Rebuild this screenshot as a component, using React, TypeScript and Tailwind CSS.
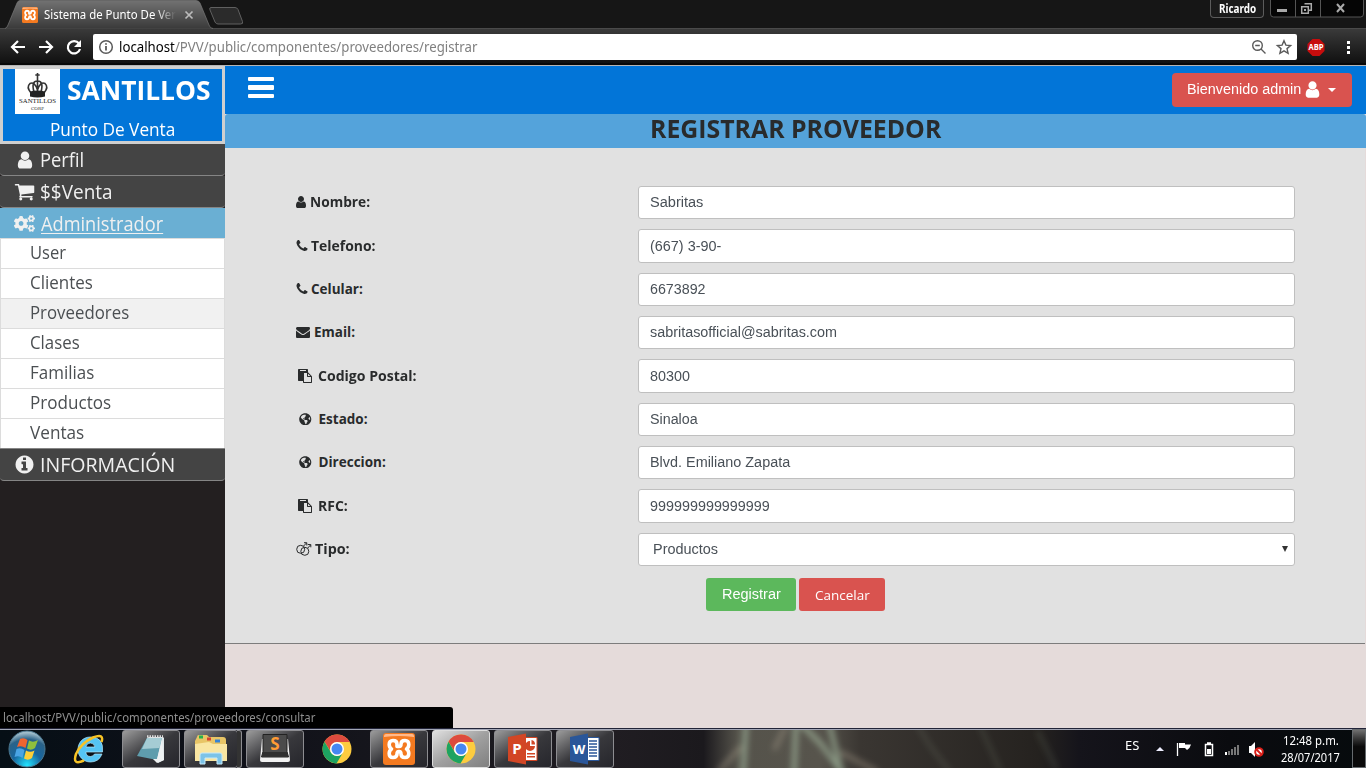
import { useLayoutEffect, useRef, useState, type ReactNode } from "react";
import { FaCogs, FaGlobeAmericas } from "react-icons/fa";

/* Inline text that is condensed or widened to a given advance width. */
function Fit({ w, children, className = "", inner = "" }: { w: number; children: ReactNode; className?: string; inner?: string }) {
  const ref = useRef<HTMLSpanElement>(null);
  const [scale, setScale] = useState(1);
  useLayoutEffect(() => {
    if (ref.current) setScale(w / ref.current.offsetWidth);
  }, [w]);
  return (
    <span className={"inline-block shrink-0 whitespace-nowrap text-left " + className} style={{ width: w }}>
      <span ref={ref} className={"inline-block origin-left " + inner} style={{ transform: `scaleX(${scale})` }}>
        {children}
      </span>
    </span>
  );
}

const paths = {
  user: "M1536 1399q0 109-62.5 187t-150.5 78h-854q-88 0-150.5-78t-62.5-187q0-85 8.5-160.5t31.5-152 58.5-131 94-89 134.5-34.5q131 128 313 128t313-128q76 0 134.5 34.5t94 89 58.5 131 31.5 152 8.5 160.5zm-256-887q0 159-112.5 271.5t-271.5 112.5-271.5-112.5-112.5-271.5 112.5-271.5 271.5-112.5 271.5 112.5 112.5 271.5z",
  cart: "M704 1536q0 52-38 90t-90 38-90-38-38-90 38-90 90-38 90 38 38 90zm896 0q0 52-38 90t-90 38-90-38-38-90 38-90 90-38 90 38 38 90zm128-1088v512q0 24-16.5 42.5t-40.5 21.5l-1044 122q13 60 13 70 0 16-24 64h920q26 0 45 19t19 45-19 45-45 19h-1024q-26 0-45-19t-19-45q0-11 8-31.5t16-36 21.5-40 15.5-29.5l-177-823h-204q-26 0-45-19t-19-45 19-45 45-19h256q16 0 28.5 6.5t19.5 15.5 13 24.5 8 26 5.5 29.5 4.5 26h1201q26 0 45 19t19 45z",
  phone: "M1600 1240q0 27-10 70.5t-21 68.5q-21 50-122 106-94 51-186 51-27 0-53-3.5t-57.5-12.5-47-14.5-55.5-20.5-49-18q-98-35-175-83-127-79-264-216t-216-264q-48-77-83-175-3-9-18-49t-20.5-55.5-14.5-47-12.5-57.5-3.5-53q0-92 51-186 56-101 106-122 25-11 68.5-21t70.5-10q14 0 21 3 18 6 53 76 11 19 30 54t35 63.5 31 53.5q3 4 17.5 25t21.5 35.5 7 28.5q0 20-28.5 50t-62 55-62 53-28.5 46q0 9 5 22.5t8.5 20.5 14 24 11.5 19q76 137 174 235t235 174q2 1 19 11.5t24 14 20.5 8.5 22.5 5q18 0 46-28.5t53-62 55-62 50-28.5q14 0 28.5 7t35.5 21.5 25 17.5q25 15 53.5 31t63.5 35 54 30q70 35 76 53 3 7 3 21z",
  mail: "M1792 710v794q0 66-47 113t-113 47h-1472q-66 0-113-47t-47-113v-794q44 49 101 87 362 246 497 345 57 42 92.5 65.5t94.5 48 110 24.5h2q51 0 110-24.5t94.5-48 92.5-65.5q170-123 498-345 57-39 100-87zm0-294q0 79-49 151t-122 123q-376 261-468 325-10 7-42.5 31t-54 38.5-52 32.5-57.5 27-50 9h-2q-23 0-50-9t-57.5-27-52-32.5-54-38.5-42.5-31q-91-64-262-182.5t-205-142.5q-62-42-117-115.5t-55-136.5q0-78 41.5-130t118.5-52h1472q65 0 112.5 47t47.5 113z",
  paste: "M768 1664h896v-640h-416q-40 0-68-28t-28-68v-416h-384v1152zm256-1440v-64q0-13-9.5-22.5t-22.5-9.5h-704q-13 0-22.5 9.5t-9.5 22.5v64q0 13 9.5 22.5t22.5 9.5h704q13 0 22.5-9.5t9.5-22.5zm256 672h299l-299-299v299zm512 128v672q0 40-28 68t-68 28h-960q-40 0-68-28t-28-68v-160h-544q-40 0-68-28t-28-68v-1344q0-40 28-68t68-28h1088q40 0 68 28t28 68v328q21 13 36 28l408 408q28 28 48 76t20 88z",
  info: "M1152 1376v-160q0-14-9-23t-23-9h-96v-512q0-14-9-23t-23-9h-320q-14 0-23 9t-9 23v160q0 14 9 23t23 9h96v320h-96q-14 0-23 9t-9 23v160q0 14 9 23t23 9h448q14 0 23-9t9-23zm-128-896v-160q0-14-9-23t-23-9h-192q-14 0-23 9t-9 23v160q0 14 9 23t23 9h192q14 0 23-9t9-23zm640 416q0 209-103 385.5t-279.5 279.5-385.5 103-385.5-103-279.5-279.5-103-385.5 103-385.5 279.5-279.5 385.5-103 385.5 103 279.5 279.5 103 385.5z",
};

function Glyph({ name, className }: { name: keyof typeof paths; className: string }) {
  return (
    <svg viewBox="0 0 1792 1792" fill="currentColor" className={"shrink-0 " + className}>
      <path d={paths[name]} />
    </svg>
  );
}

function Xampp({ className }: { className: string }) {
  return (
    <svg viewBox="0 0 32 32" className={"shrink-0 " + className}>
      <rect width="32" height="32" rx="3" fill="#f47a20" />
      <path d="M1 3q0-2 2-2h26q2 0 2 2v1q-15-2-30 0z" fill="#ffb98a" />
      <path
        d="M14 13.500V11q0-3.500-4-3.500-3.800 0-3.800 4 0 3 2.300 4.500-2.300 1.500-2.300 4.500 0 4 3.800 4 4 0 4-3.500 0-2.500 2-2.500t2 2.500q0 3.500 4 3.500 3.800 0 3.800-4 0-3-2.300-4.500 2.300-1.500 2.300-4.500 0-4-3.800-4-4 0-4 3.500 0 2.500-2 2.500t-2-2.500"
        fill="none" stroke="#fff" strokeWidth="3.600" strokeLinecap="round" strokeLinejoin="round"
      />
    </svg>
  );
}

function Chrome() {
  return (
    <svg viewBox="0 0 30 30" className="size-[30px]">
      <circle cx="15" cy="15" r="14.500" fill="#fdcc3f" />
      <path d="M2.500 7.700A14.500 14.500 0 0 1 27.700 8H15a7 7 0 0 0-6.600 9z" fill="#dd4b3e" />
      <path d="M2.500 7.700A14.500 14.500 0 0 0 14.500 29.500L21 18.500a7 7 0 0 1-12 0z" fill="#1da361" />
      <circle cx="15" cy="15" r="7" fill="#fff" />
      <circle cx="15" cy="15" r="5.500" fill="#4688f1" />
    </svg>
  );
}

function BrowserChrome() {
  return (
    <header className="relative h-[66px] w-full bg-[#161616] font-['Noto_Sans','Open_Sans',sans-serif]">
      <div className="h-[28px]" />
      <div className="flex h-[35px] items-center border-t border-[#4a4a4a] bg-gradient-to-b from-[#3a3a3a] to-[#111] pt-px">
        <svg viewBox="0 0 90 34" className="h-[34px] w-[90px] shrink-0" fill="none" stroke="#fff" strokeWidth="2.200">
          <path d="M25 17H12M18 11l-6 6 6 6M39 17h13M46 11l6 6-6 6" />
          <path d="M79 13.500A6.200 6.200 0 1 0 80 19" />
          <path d="M81 10v7h-7z" fill="#fff" stroke="none" />
        </svg>
        <div className="ml-[3px] flex h-[26px] w-[1204px] items-center rounded-[2px] bg-white">
          <svg viewBox="0 0 16 16" className="ml-[5px] size-4" fill="none" stroke="#5a5a5a" strokeWidth="1.500">
            <circle cx="8" cy="8" r="6.300" />
            <path d="M8 7v4.500M8 4.200v1.600" strokeWidth="1.800" />
          </svg>
          <Fit w={358} className="ml-[5px] text-[14px] leading-[20px] text-[#808080]">
            <span className="text-black">localhost</span>/PVV/public/componentes/proveedores/registrar
          </Fit>
          <svg viewBox="0 0 44 16" className="ml-auto mr-[2px] h-4 w-[44px]" fill="none" stroke="#5a5a5a" strokeWidth="1.400">
            <circle cx="6.500" cy="6.500" r="4.800" />
            <path d="M10 10l4.500 4.500M4.200 6.500h4.600" />
            <path d="M33 1.700l1.900 4.400 4.700.4-3.600 3.100 1.100 4.700-4.100-2.500-4.100 2.500L30 9.600l-3.600-3.100 4.700-.4z" />
          </svg>
        </div>
        <svg viewBox="0 0 69 34" className="h-[34px] w-[69px]">
          <path d="M15.500 9h7l5 5v7l-5 5h-7l-5-5v-7z" fill="#c70d0d" />
          <text x="19" y="20.300" textAnchor="middle" fontSize="8" fontWeight="700" fill="#fff" textLength="15" lengthAdjust="spacingAndGlyphs" fontFamily="Open Sans">ABP</text>
          <path d="M50 11h3v3h-3zM50 16h3v3h-3zM50 21h3v3h-3z" fill="#fff" />
        </svg>
      </div>
      <div className="h-[2px] bg-[#080808]" />
      <div className="h-px bg-[#b5b5b5]" />

      <svg viewBox="0 0 250 29" className="absolute left-0 top-0 h-[29px] w-[250px]">
        <defs>
          <linearGradient id="tab" x2="0" y2="1">
            <stop offset="0" stopColor="#727272" />
            <stop offset="1" stopColor="#3a3a3a" />
          </linearGradient>
        </defs>
        <path d="M0 28.500h5Q7 28 8 25L17 3q1-2.500 3-2.500h176q3 0 4 2.500l9 22q1 3.500 4 3.500z" fill="url(#tab)" />
        <path d="M5 28.500Q7 28 8 25L17 3q1-2.500 3-2.500h176q3 0 4 2.500l9 22q1 3.500 4 3.500" fill="none" stroke="#777" strokeWidth=".7" />
        <path d="M211 7.500h24q2 0 3 2l4.500 12q1 2.500-2 2.500H218q-2 0-3-2l-5-12q-1-2.500 1-2.500z" fill="#2b2b2b" stroke="#606060" />
        <path d="M185.500 11.500l7 7m0-7l-7 7" stroke="#bbb" strokeWidth="1.700" />
      </svg>
      <div className="absolute left-[22px] top-[7px] flex items-center">
        <Xampp className="size-4" />
        <Fit w={132} className="ml-[6px] text-[12px] leading-4 text-white [mask-image:linear-gradient(to_right,black_85%,transparent)]">
          Sistema de Punto De Ver
        </Fit>
      </div>
      <div className="absolute left-[1210px] top-0 flex h-[18px] w-[54px] justify-center rounded-b border border-t-0 border-[#5c5c5c] bg-[#1b1b1b]">
        <Fit w={37} className="text-[11.500px] font-bold leading-[17px] text-white">Ricardo</Fit>
      </div>
      <svg viewBox="0 0 94 18" className="absolute left-[1270px] top-0 h-[18px] w-[94px]" fill="none">
        <path d="M.5 0v14q0 3 3 3h87q3 0 3-3V0M25.500 0v17M50.500 0v17" fill="#050505" stroke="#555" />
        <path d="M7 9h10v3H7z" fill="#a8a8a8" />
        <path d="M31.700 6.700h6.600v6.600h-6.600zM34.500 3.700h6.800v6.600H39" stroke="#aaa" strokeWidth="1.500" />
        <path d="M34 9h2v2h-2z" fill="#aaa" />
        <path d="M67 4l7 8m0-8l-7 8" stroke="#aaa" strokeWidth="2" />
      </svg>
    </header>
  );
}

const submenu: [string, number][] = [
  ["User", 36], ["Clientes", 63], ["Proveedores", 99], ["Clases", 50], ["Familias", 64], ["Productos", 81], ["Ventas", 54],
];

function Sidebar() {
  return (
    <aside className="flex w-[225px] shrink-0 flex-col bg-[#231f20] font-['Open_Sans','Noto_Sans',sans-serif] text-[20px] text-[#f0f0f0]">
      <div className="h-[78px] border-[3px] border-[#cfcfcf] bg-[#0275d8] text-white">
        <div className="flex h-[45px]">
          <svg viewBox="0 0 45 45" className="ml-3 size-[45px] bg-white">
            <g fill="none" stroke="#333" strokeWidth="1.600">
              <path d="M22.500 4v19M20.300 6h4.400M16 24q-5-6-1-9.500 4.500-2.500 7.500 6.500 3-9 7.500-6.500 4 3.500-1 9.500M19 23q-3-11 3.500-11T26 23" />
            </g>
            <path d="M15 22.500q7.500-2 15 0v5q-7.500 2-15 0z" fill="#222" />
            <text x="22.500" y="33.800" fontSize="7" textAnchor="middle" textLength="37" lengthAdjust="spacingAndGlyphs" fontFamily="Liberation Serif" fill="#222">SANTILLOS</text>
            <text x="22.500" y="41" fontSize="5" textAnchor="middle" textLength="13" lengthAdjust="spacingAndGlyphs" fontFamily="Liberation Serif" fill="#333">CORP</text>
          </svg>
          <Fit w={143} className="ml-[7px] text-[26px] font-bold leading-[43px]">SANTILLOS</Fit>
        </div>
        <Fit w={125} className="ml-[47px] block text-[17.500px] leading-[22px]">Punto De Venta</Fit>
      </div>
      <div className="flex h-8 items-center rounded-b-sm border-b border-[#858585] bg-[#444]">
        <Glyph name="user" className="ml-[15px] size-5" />
        <Fit w={44} className="ml-[5px] leading-[30px]">Perfil</Fit>
      </div>
      <div className="flex h-8 items-center rounded-b-sm border-b border-[#858585] bg-[#444]">
        <Glyph name="cart" className="ml-[14px] size-[21px]" />
        <Fit w={73} className="ml-[5px] leading-[30px]">$$Venta</Fit>
      </div>
      <div className="flex h-[30px] items-center bg-[#6aafd3]">
        <FaCogs className="ml-[14px] size-[21px]" />
        <Fit w={122} className="ml-[6px] pt-[2px] leading-[30px]" inner="underline decoration-1 underline-offset-2">Administrador</Fit>
      </div>
      <div className="bg-white text-[17.500px] text-[#4b4f52]">
        {submenu.map(([label, w]) => (
          <div key={label} className={"flex h-[30px] items-center border border-b-0 border-[#dcdcdc] pl-[29px] " + (label === "Proveedores" ? "bg-[#f1f1f1]" : "bg-white")}>
            <Fit w={w} className="pb-[2px] leading-[27px]">{label}</Fit>
          </div>
        ))}
      </div>
      <div className="flex h-[33px] items-center rounded-b-sm border-y border-[#858585] bg-[#444]">
        <Glyph name="info" className="ml-[14px] size-[21px]" />
        <Fit w={135} className="ml-[5px] leading-[31px]">INFORMACIÓN</Fit>
      </div>
    </aside>
  );
}

function MarsDouble() {
  return (
    <svg viewBox="0 0 16 16" className="mr-[3px] size-4" fill="none" stroke="#292b2c" strokeWidth="1">
      <circle cx="4.700" cy="8.300" r="4" />
      <circle cx="8.800" cy="10.300" r="4" />
      <path d="M7.300 5.300L10.500 2M8 1.700h2.800v2.800M11.500 7.300l3-3.300M11.800 3.500h3v2.800" />
    </svg>
  );
}

const paste = <Glyph name="paste" className="ml-[2px] mr-[6px] size-[14px]" />;
const globe = <FaGlobeAmericas className="ml-[3px] mr-[7px] size-[12.500px]" />;
const phone = <Glyph name="phone" className="-ml-px mr-[2px] size-[14px]" />;

const fields: { icon: ReactNode; label: string; lw: number; value: string; vw: number }[] = [
  { icon: <Glyph name="user" className="-ml-[2px] mr-[2px] size-[14px]" />, label: "Nombre:", lw: 60, value: "Sabritas", vw: 53 },
  { icon: phone, label: "Telefono:", lw: 65, value: "(667) 3-90-", vw: 71 },
  { icon: phone, label: "Celular:", lw: 52, value: "6673892", vw: 56 },
  { icon: <Glyph name="mail" className="mr-[4px] size-[14px]" />, label: "Email:", lw: 41, value: "sabritasofficial@sabritas.com", vw: 187 },
  { icon: paste, label: "Codigo Postal:", lw: 99, value: "80300", vw: 40 },
  { icon: globe, label: "Estado:", lw: 49, value: "Sinaloa", vw: 48 },
  { icon: globe, label: "Direccion:", lw: 67, value: "Blvd. Emiliano Zapata", vw: 140 },
  { icon: paste, label: "RFC:", lw: 30, value: "999999999999999", vw: 120 },
  { icon: <MarsDouble />, label: "Tipo:", lw: 35, value: "Productos", vw: 65 },
];

function Main() {
  return (
    <main className="flex min-w-0 flex-1 flex-col bg-[#e5dbda]">
      <div className="flex h-12 shrink-0 items-start justify-between bg-[#0275d8] pl-[23px] pr-[14px]">
        <div className="mt-[11px] flex w-[26px] flex-col gap-1">
          <div className="h-[4px] rounded-[1px] bg-white" />
          <div className="h-[5px] rounded-[1px] bg-white" />
          <div className="h-[4px] rounded-[1px] bg-white" />
        </div>
        <button className="mt-[7px] flex h-[34px] w-[180px] items-center rounded-[4px] bg-[#d9534f] pl-[15px] font-['Liberation_Sans',sans-serif] text-[14px] text-white">
          <Fit w={114} className="pb-[2px]">Bienvenido admin</Fit>
          <Glyph name="user" className="mb-px ml-[2px] size-[19px]" />
          <span className="ml-[6px] border-x-4 border-t-4 border-x-transparent border-t-white" />
        </button>
      </div>
      <h1 className="flex h-[34px] shrink-0 justify-center rounded-t-[3px] bg-[#54a3db] font-['Open_Sans','Noto_Sans',sans-serif] text-[24.500px] font-bold leading-[30px] text-[#292b2c]">
        <Fit w={291}>REGISTRAR PROVEEDOR</Fit>
      </h1>
      <form className="mr-px h-[496px] shrink-0 border-b border-[#7c7c7c] bg-[#e1e1e1] pt-[38.100px]">
        {fields.map((f) => (
          <div key={f.label} className="mb-[10px] flex h-[33.330px] items-center pl-[71px] text-[#292b2c]">
            <div className="flex w-[342px] items-center pb-px">
              {f.icon}
              <Fit w={f.lw} className="font-['Open_Sans','Noto_Sans',sans-serif] text-[13.500px] font-bold leading-5">{f.label}</Fit>
            </div>
            <div className="flex h-full w-[657px] items-center rounded-[3px] border border-[#bfbfbf] bg-white px-[11px] font-['Liberation_Sans',sans-serif] text-[14px] text-[#495057]">
              <Fit w={f.vw} className={f.label === "Tipo:" ? "ml-[3px] pt-px" : ""}>{f.value}</Fit>
              {f.label === "Tipo:" && (
                <span className="-mr-[5px] ml-auto border-x-[3px] border-t-[6px] border-x-transparent border-t-[#333]" />
              )}
            </div>
          </div>
        ))}
        <div className="ml-[481px] mt-[12px] flex gap-[3px] text-white">
          <button type="button" className="flex h-[33px] w-[90px] items-center justify-center rounded-[3px] bg-[#5cb85c] font-['Liberation_Sans',sans-serif] text-[14px]">
            <Fit w={59}>Registrar</Fit>
          </button>
          <button type="button" className="flex h-[33px] w-[86px] items-center justify-center rounded-[3px] bg-[#d9534f] pt-[2px] font-['Open_Sans','Noto_Sans',sans-serif] text-[13px]">
            <Fit w={55}>Cancelar</Fit>
          </button>
        </div>
      </form>
    </main>
  );
}

function TaskButton({ children, active = false }: { children: ReactNode; active?: boolean }) {
  return (
    <div className={"mr-1 flex h-[38px] w-[58px] shrink-0 items-center justify-center rounded-[3px] border bg-gradient-to-br " + (active ? "border-[#ddd] from-[#e0e0e0] via-[#a0a0a0] to-[#808080]" : "border-[#8d8d91] from-[#9c9c9c] via-[#38383c] to-[#26262c]")}>
      {children}
    </div>
  );
}

function Office({ letter, color, ppt }: { letter: string; color: string; ppt?: boolean }) {
  return (
    <svg viewBox="0 0 30 32" className="h-8 w-[30px]">
      <path d="M14 4.500h15v23H14z" fill="#fff" stroke={color} />
      {ppt ? (
        <g fill={color}>
          <path d="M22 8a5 5 0 1 0 5 5h-5z" />
          <path d="M23.500 7v4.500H27A4 4 0 0 0 23.500 7zM19 20h8v1.500h-8zM19 23h8v1.500h-8z" />
        </g>
      ) : (
        <path d="M19 8h8M19 11h8M19 14h8M19 17h8M19 20h8M19 23h8" stroke={color} strokeWidth="1.300" />
      )}
      <path d="M0 4l18-3.500v31L0 28z" fill={color} />
      <text x="9" y="21" textAnchor="middle" fontFamily="Open Sans" fontWeight="700" fontSize={ppt ? 15 : 13} fill="#fff">{letter}</text>
    </svg>
  );
}

function Taskbar() {
  return (
    <footer className="relative flex h-10 w-full items-start bg-[#0a0d12] pt-px font-['Noto_Sans','Open_Sans',sans-serif]">
      <svg viewBox="0 0 1366 40" className="absolute left-0 top-0 h-10 w-[1366px]">
        <defs>
          <linearGradient id="bar">
            <stop offset="0" stopColor="#060f16" />
            <stop offset=".15" stopColor="#0e1018" />
            <stop offset=".45" stopColor="#201d22" />
            <stop offset=".515" stopColor="#1b191d" />
            <stop offset=".54" stopColor="#55534b" />
            <stop offset=".6" stopColor="#57544c" />
            <stop offset=".63" stopColor="#3a3632" />
            <stop offset=".76" stopColor="#25221f" />
            <stop offset=".79" stopColor="#15141b" />
            <stop offset=".9" stopColor="#0a0b0f" />
            <stop offset="1" stopColor="#060b0d" />
          </linearGradient>
          <filter id="soft" filterUnits="userSpaceOnUse" x="600" y="-20" width="600" height="80">
            <feGaussianBlur stdDeviation="3" />
          </filter>
        </defs>
        <path d="M0 0h1366v40H0z" fill="url(#bar)" />
        <g filter="url(#soft)" fill="none" strokeLinecap="round">
          <path d="M746 -5l-3 50M796 -5l-2 50M802 -3l20 20 20 28M829 -5l12 48" stroke="#9fb39b" strokeWidth="5" opacity=".75" />
          <path d="M740 20l-20 22M842 25l34 18M775 20l10-20" stroke="#a39a88" strokeWidth="5" opacity=".45" />
          <path d="M918 -2l12 20 20 26M980 -2l20 44M1038 4l18 36" stroke="#8b9a85" strokeWidth="3" opacity=".25" />
        </g>
        <path d="M0 .5h1366" stroke="#222438" />
        <path d="M0 1.500h1366" stroke="#a2a6b6" />
      </svg>

      <div className="relative flex h-[39px] items-center">
        <svg viewBox="0 0 38 38" className="ml-2 size-[38px]">
          <defs>
            <radialGradient id="orb" cx=".5" cy=".95" r=".9">
              <stop offset="0" stopColor="#22e4ff" />
              <stop offset=".45" stopColor="#17669f" />
              <stop offset=".8" stopColor="#2a6288" />
              <stop offset="1" stopColor="#a0bdcb" />
            </radialGradient>
          </defs>
          <circle cx="19" cy="19" r="18" fill="url(#orb)" stroke="#4b7890" />
          <path d="M12 9q4-2 7.500 1l-2 8q-4-3-8.500-1z" fill="#ef6530" />
          <path d="M21 10.500q4 2.500 9-.5l-3 8q-4 3-8 .5z" fill="#8fc03d" />
          <path d="M8.500 19q4-2 8 1l-2 8q-3.500-3-8-1z" fill="#4aa4e4" />
          <path d="M18 20.500q4 2.500 8.500 0l-2.500 7.500q-4 3-8 .5z" fill="#fdcf38" />
        </svg>
        <svg viewBox="0 0 32 32" className="ml-[27px] size-8">
          <path
            fillRule="evenodd"
            d="M17.500 4C9.500 4 5 10 5 16.500S10 29 17.500 29q8.500 0 11.500-8h-7.500q-1.300 2.500-4 2.500-4.300 0-4.700-4.500H29.500Q31 4 17.500 4zM12.900 14q.6-4 4.500-4t4.500 4z"
            fill="#55c4f4" stroke="#b5e8fb" strokeWidth=".7"
          />
          <path d="M28.500 9Q31.500 0 20 4.500 8 10 3 21q-4 12 8 6.500" fill="none" stroke="#f7c325" strokeWidth="2.500" />
        </svg>
        <div className="w-[17px]" />
        <TaskButton>
          <svg viewBox="0 0 32 32" className="size-8">
            <path d="M13 4h15l1 1v22l-6 3z" fill="#dfe6e8" />
            <path d="M12 5h15l-5 22L2 23z" fill="#5f9dad" />
            <path d="M12 5h15l-2.500 10L7 16z" fill="#a5ccd4" />
            <path d="M27 6l2 21-7 3-4-4h4z" fill="#eef1f2" />
            <path d="M12 3.500h16" stroke="#ddd" strokeWidth="2.500" strokeDasharray="1.500 1" />
          </svg>
        </TaskButton>
        <div className="relative">
          <div className="absolute left-[53px] top-0 h-[38px] w-[5px] rounded-r-[3px] border border-l-0 border-[#8d8d91] bg-[#333]" />
          <div className="mr-1 flex h-[38px] w-[58px] pr-1">
            <div className="flex flex-1 items-center justify-center rounded-[3px] border border-[#8d8d91] bg-gradient-to-br from-[#9c9c9c] via-[#38383c] to-[#26262c]">
              <svg viewBox="0 0 34 32" className="h-8 w-[34px]">
                <path d="M3 4q0-2 2-2h8l2 2h14q3 0 3 3v21H1V8z" fill="#e8c566" />
                <path d="M5 2.500h4v3H5z" fill="#24b14c" />
                <path d="M13 4.500h4v3h-4z" fill="#d8412f" />
                <path d="M21 6.500h5v3h-5z" fill="#3684d4" />
                <path d="M1 11l14-2 4 2h14v17H1z" fill="#f9e6a2" />
                <path d="M6 31V22q0-2 2-2h18q2 0 2 2v9h-5v-6H11v6z" fill="#7cc3e8" stroke="#c7eafa" />
              </svg>
            </div>
          </div>
        </div>
        <TaskButton>
          <svg viewBox="0 0 32 32" className="size-8">
            <path d="M3 6h26l2 21q0 2-2 2H3q-2 0-2-2z" fill="#f2f2f2" />
            <path d="M4 1.500h24v17l1.500 5.500h-27L4 18.500z" fill="#4b4b4b" stroke="#222" />
            <path d="M4 19h24l1.200 4.500H2.800z" fill="#2f2f2f" />
            <text x="16" y="16.500" textAnchor="middle" fontFamily="Open Sans" fontWeight="700" fontSize="17" fill="#ff9c35">S</text>
          </svg>
        </TaskButton>
        <div className="mr-1 flex w-[58px] justify-center"><Chrome /></div>
        <TaskButton><Xampp className="size-8" /></TaskButton>
        <TaskButton active><Chrome /></TaskButton>
        <TaskButton><Office letter="P" color="#d24625" ppt /></TaskButton>
        <TaskButton><Office letter="W" color="#2a5699" /></TaskButton>
      </div>

      <div className="relative ml-auto flex h-[39px] text-white">
        <Fit w={14} className="-ml-px mr-px mt-[8px] text-[12px] leading-[18px]">ES</Fit>
        <svg viewBox="0 0 112 39" className="ml-[14px] mr-px h-[39px] w-[112px]">
          <path d="M2 22l4-4 4 4z" fill="#eef" />
          <path d="M23.500 14v13" stroke="#fff" strokeWidth="1.300" />
          <path d="M25 14h6v1.500h6q-1 4-4 5.500l-2-2h-6z" fill="#fff" />
          <path d="M51.500 15.500h7v11h-7zM53 14h4" fill="none" stroke="#fff" strokeWidth="1.500" />
          <path d="M53 20h4v5h-4z" fill="#fff" />
          <path d="M71 23h2v3h-2z" fill="#fff" />
          <path d="M74 22h2v4h-2zM77 20h2v6h-2zM80 18h2v8h-2zM83 16h2v10h-2z" fill="#777" />
          <path d="M95 17h2l4-4v15l-4-4h-2z" fill="#fff" />
          <circle cx="105" cy="23" r="3.800" fill="#fff" stroke="#d91e18" strokeWidth="2" />
          <path d="M102 20l6 6" stroke="#d91e18" strokeWidth="2" />
        </svg>
        <div className="ml-[14px] mt-[3px] flex flex-col items-center text-[12px] leading-[17px]">
          <Fit w={56}>12:48 p.m.</Fit>
          <Fit w={59}>28/07/2017</Fit>
        </div>
        <div className="ml-[12px] h-[39px] w-[14px] border border-[#666b6e] bg-gradient-to-b from-[#707070] to-[#0a0a0a] to-45%" />
      </div>
    </footer>
  );
}

export default function App() {
  return (
    <div className="relative flex h-[768px] w-[1366px] flex-col overflow-hidden">
      <BrowserChrome />
      <div className="flex h-[662px]">
        <Sidebar />
        <Main />
      </div>
      <div className="absolute left-0 top-[707px] z-10 flex h-[21px] w-[453px] items-center rounded-tr-[3px] bg-black pl-[3px] font-['Noto_Sans','Open_Sans',sans-serif] text-[12px] text-[#8f8f8f]">
        <Fit w={312}>localhost/PVV/public/componentes/proveedores/consultar</Fit>
      </div>
      <Taskbar />
    </div>
  );
}
